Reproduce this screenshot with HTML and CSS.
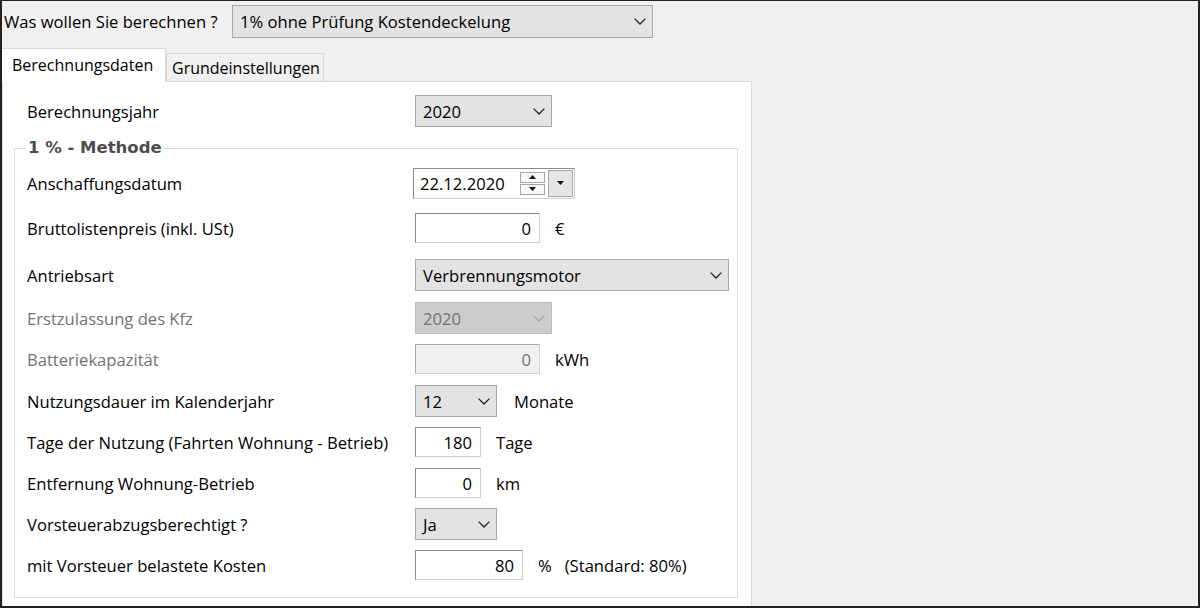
FILE: index.html
```html
<!DOCTYPE html>
<html lang="de">
<head>
    <meta charset="UTF-8">
    <meta name="viewport" content="width=device-width, initial-scale=1.0">
    <title>1% Methode</title>
    <link rel="stylesheet" href="styles.css">
</head>
<body>
    <div class="window">
        <div class="topbar">
            <span class="top-label">Was wollen Sie berechnen ?</span>
            <div class="combo combo-main">
                <span>1% ohne Prüfung Kostendeckelung</span>
                <svg class="chev" viewBox="0 0 12 7" width="12" height="7"><path d="M0.6 0.6 L6 6 L11.4 0.6" /></svg>
            </div>
        </div>

        <div class="tabs">
            <div class="tab active">Berechnungsdaten</div>
            <div class="tab">Grundeinstellungen</div>
        </div>

        <div class="panel">
            <div class="row year-row">
                <span class="label">Berechnungsjahr</span>
                <div class="combo w-year">
                    <span>2020</span>
                    <svg class="chev" viewBox="0 0 12 7" width="12" height="7"><path d="M0.6 0.6 L6 6 L11.4 0.6" /></svg>
                </div>
            </div>

            <fieldset class="group">
                <legend>1 % - Methode</legend>
                <div class="rows">
                    <div class="row">
                        <span class="label">Anschaffungsdatum</span>
                        <div class="date">
                            <span class="date-text">22.12.2020</span>
                            <div class="spin">
                                <span class="spin-btn"><svg viewBox="0 0 7 4" width="7" height="4"><path d="M0 4 L3.5 0 L7 4 Z" /></svg></span>
                                <span class="spin-btn"><svg viewBox="0 0 7 4" width="7" height="4"><path d="M0 0 L3.5 4 L7 0 Z" /></svg></span>
                            </div>
                            <span class="date-drop"><svg viewBox="0 0 7 4" width="7" height="4"><path d="M0 0 L3.5 4 L7 0 Z" /></svg></span>
                        </div>
                    </div>

                    <div class="row push-4">
                        <span class="label">Bruttolistenpreis (inkl. USt)</span>
                        <div class="field w-price">0</div>
                        <span class="unit">€</span>
                    </div>

                    <div class="row push-6">
                        <span class="label">Antriebsart</span>
                        <div class="combo w-drive">
                            <span>Verbrennungsmotor</span>
                            <svg class="chev" viewBox="0 0 12 7" width="12" height="7"><path d="M0.6 0.6 L6 6 L11.4 0.6" /></svg>
                        </div>
                    </div>

                    <div class="row push-2 disabled">
                        <span class="label">Erstzulassung des Kfz</span>
                        <div class="combo w-year">
                            <span>2020</span>
                            <svg class="chev" viewBox="0 0 12 7" width="12" height="7"><path d="M0.6 0.6 L6 6 L11.4 0.6" /></svg>
                        </div>
                    </div>

                    <div class="row disabled">
                        <span class="label">Batteriekapazität</span>
                        <div class="field w-price">0</div>
                        <span class="unit">kWh</span>
                    </div>

                    <div class="row push-1">
                        <span class="label">Nutzungsdauer im Kalenderjahr</span>
                        <div class="combo w-small">
                            <span>12</span>
                            <svg class="chev" viewBox="0 0 12 7" width="12" height="7"><path d="M0.6 0.6 L6 6 L11.4 0.6" /></svg>
                        </div>
                        <span class="unit unit-wide">Monate</span>
                    </div>

                    <div class="row">
                        <span class="label">Tage der Nutzung (Fahrten Wohnung - Betrieb)</span>
                        <div class="field w-days">180</div>
                        <span class="unit">Tage</span>
                    </div>

                    <div class="row">
                        <span class="label">Entfernung Wohnung-Betrieb</span>
                        <div class="field w-days">0</div>
                        <span class="unit">km</span>
                    </div>

                    <div class="row">
                        <span class="label">Vorsteuerabzugsberechtigt ?</span>
                        <div class="combo w-small">
                            <span>Ja</span>
                            <svg class="chev" viewBox="0 0 12 7" width="12" height="7"><path d="M0.6 0.6 L6 6 L11.4 0.6" /></svg>
                        </div>
                    </div>

                    <div class="row">
                        <span class="label">mit Vorsteuer belastete Kosten</span>
                        <div class="field w-percent">80</div>
                        <span class="unit">%</span>
                        <span class="hint">(Standard: 80%)</span>
                    </div>
                </div>
            </fieldset>
        </div>
    </div>
</body>
</html>
```

FILE: styles.css
```css
body {
    margin: 0;
    font-family: "Open Sans", "Noto Sans", sans-serif;
    font-size: 16.6px;
    color: #000;
}

.window {
    width: 1200px;
    height: 608px;
    box-sizing: border-box;
    border: 2px solid #222;
    border-top-width: 1px;
    background-color: #f0f0f0;
    display: flex;
    flex-direction: column;
    overflow: hidden;
}

/* top selection */
.topbar {
    display: flex;
    align-items: center;
    padding: 4px 0 0 2px;
}

.top-label {
    width: 228px;
}

.combo {
    box-sizing: border-box;
    height: 32px;
    display: flex;
    align-items: center;
    justify-content: space-between;
    padding: 0 6px 0 7px;
    background-color: #e3e3e3;
    border: 1px solid #a9a9a9;
}

.combo-main {
    width: 421px;
    height: 33px;
    padding-left: 7px;
}

.chev path {
    fill: none;
    stroke: #222;
    stroke-width: 1.3;
}

/* tabs */
.tabs {
    display: flex;
    align-items: flex-end;
    height: 33px;
    margin-top: 10px;
    font-size: 16px;
}

.tab {
    box-sizing: border-box;
    height: 28px;
    width: 158px;
    padding-left: 5px;
    display: flex;
    align-items: center;
    background-color: #f0f0f0;
    border: 1px solid #d9d9d9;
    border-bottom: none;
}

.tab.active {
    position: relative;
    z-index: 1;
    height: 34px;
    width: 164px;
    margin-bottom: -1px;
    padding-left: 10px;
    padding-bottom: 2px;
    background-color: #fff;
    border-left: none;
}

/* panel */
.panel {
    flex: 1;
    width: 750px;
    box-sizing: border-box;
    background-color: #fff;
    border: 1px solid #d9d9d9;
    border-bottom: none;
    padding: 13px 13px 0 11px;
}

.row {
    display: flex;
    align-items: center;
    height: 32px;
}

.year-row {
    padding-left: 13px;
}

.label {
    width: 388px;
    flex-shrink: 0;
    white-space: nowrap;
}

.group {
    margin: 10px 0 0 0;
    padding: 8px 0 16px 12px;
    border: 1px solid #dcdcdc;
}

.group legend {
    margin-left: -1px;
    padding: 0 2px;
    font-family: "DejaVu Sans", sans-serif;
    font-weight: bold;
    font-size: 16.5px;
    line-height: 22px;
    color: #4d4d4d;
}

.rows {
    display: flex;
    flex-direction: column;
    gap: 9px;
}

.push-1 { margin-top: 1px; }
.push-2 { margin-top: 2px; }
.push-4 { margin-top: 4px; }
.push-6 { margin-top: 6px; }

.w-year { width: 137px; }
.w-drive { width: 314px; }
.w-small { width: 82px; }
.w-price { width: 125px; }
.w-days { width: 66px; }
.w-percent { width: 108px; }

.field {
    box-sizing: border-box;
    height: 30px;
    display: flex;
    align-items: center;
    justify-content: flex-end;
    padding-right: 8px;
    background-color: #fff;
    border: 1px solid;
    border-color: #8c8c8c #cdcdcd #cdcdcd #8c8c8c;
}

.unit {
    margin-left: 15px;
}

.unit-wide {
    margin-left: 17px;
}

.hint {
    margin-left: 13px;
}

/* disabled controls */
.disabled .label {
    color: #727272;
}

.disabled .combo {
    background-color: #cccccc;
    border-color: #bdbdbd;
    color: #727272;
}

.disabled .chev path {
    stroke: #a3a3a3;
}

.disabled .field {
    background-color: #f0f0f0;
    border-color: #a8a8a8 #d4d4d4 #d4d4d4 #a8a8a8;
    color: #727272;
}

/* date picker */
.date {
    box-sizing: border-box;
    width: 162px;
    height: 31px;
    margin-left: -2px;
    display: flex;
    align-items: center;
    padding-left: 6px;
    background-color: #fff;
    border: 1px solid;
    border-color: #8c8c8c #cdcdcd #cdcdcd #8c8c8c;
}

.date-text {
    flex: 1;
}

.spin {
    display: flex;
    flex-direction: column;
    gap: 1px;
    width: 25px;
    margin-right: 3px;
}

.spin-btn {
    box-sizing: border-box;
    height: 11px;
    display: flex;
    align-items: center;
    justify-content: center;
    background-color: #f7f7f7;
    border: 1px solid #a6a6a6;
}

.date-drop {
    box-sizing: border-box;
    width: 25px;
    height: 27px;
    margin-right: 1px;
    display: flex;
    align-items: center;
    justify-content: center;
    background-color: #e6e6e6;
    border: 1px solid #a6a6a6;
}

.date svg path {
    fill: #111;
}
```
